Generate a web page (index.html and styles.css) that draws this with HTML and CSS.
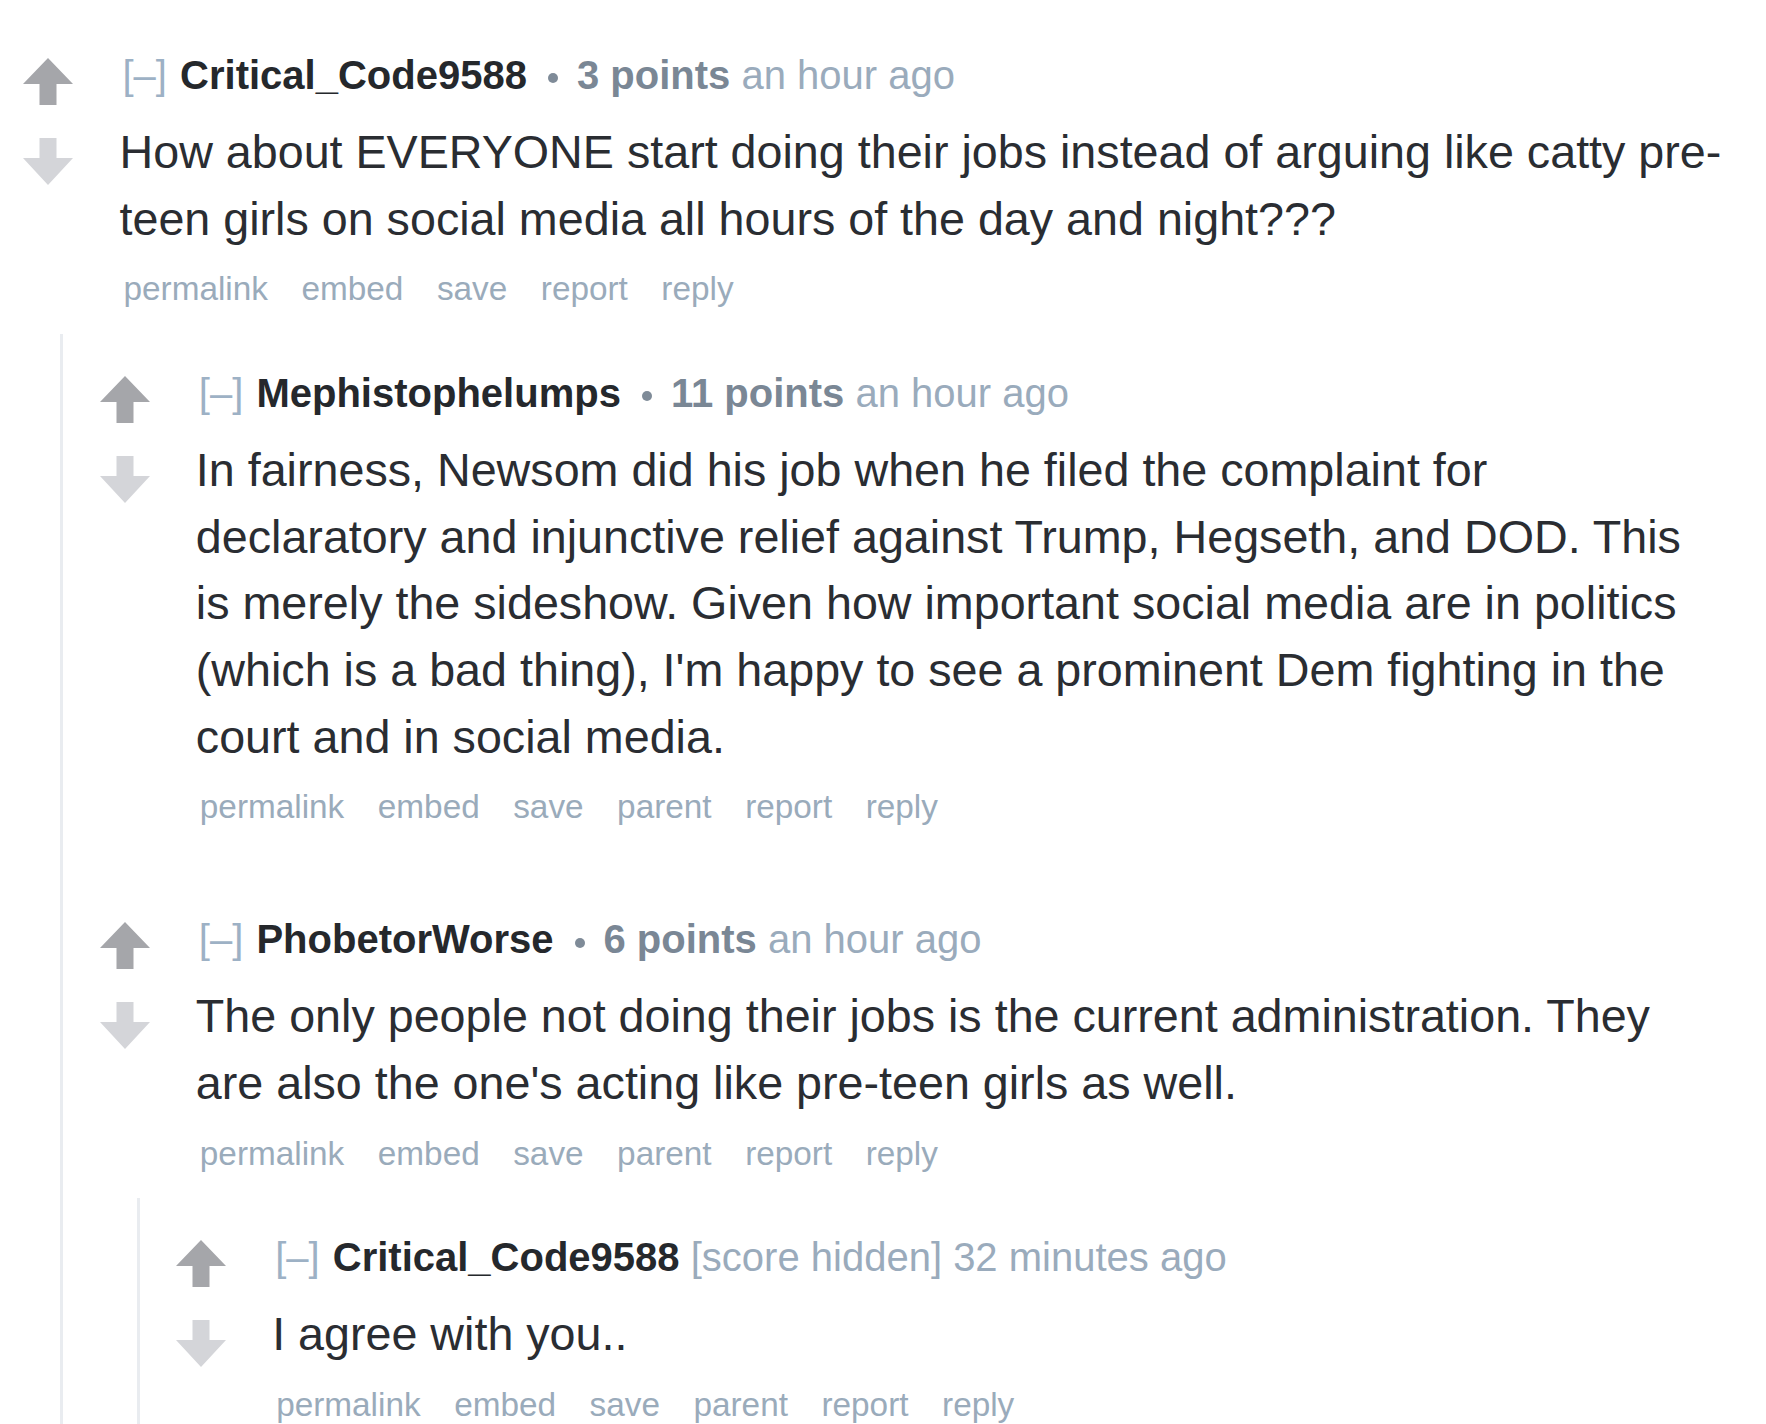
FILE: index.html
```html
<!DOCTYPE html>
<html lang="en">
<head>
<meta charset="utf-8">
<title>Comments</title>
<link rel="stylesheet" href="styles.css">
</head>
<body>
<div class="page">
  <div class="comment">
    <div class="row">
      <div class="midcol">
        <svg class="arrow" viewBox="0 0 50 47"><polygon class="up" points="25,0 50,26 33.5,26 33.5,47 16.5,47 16.5,26 0,26"/></svg>
        <svg class="arrow" viewBox="0 0 50 47"><polygon class="down" points="16.5,0 33.5,0 33.5,20 50,20 25,47 0,20 16.5,20"/></svg>
      </div>
      <div class="entry">
        <p class="tagline"><span class="expand">[–]</span> <span class="author">Critical_Code9588</span><span class="dot"></span><span class="score">3 points</span> <span class="live">an hour ago</span></p>
        <div class="md"><p>How about EVERYONE start doing their jobs instead of arguing like catty pre-teen girls on social media all hours of the day and night???</p></div>
        <ul class="buttons"><li>permalink</li><li>embed</li><li>save</li><li>report</li><li>reply</li></ul>
      </div>
    </div>
    <div class="child">
      <div class="comment">
        <div class="row">
          <div class="midcol">
            <svg class="arrow" viewBox="0 0 50 47"><polygon class="up" points="25,0 50,26 33.5,26 33.5,47 16.5,47 16.5,26 0,26"/></svg>
            <svg class="arrow" viewBox="0 0 50 47"><polygon class="down" points="16.5,0 33.5,0 33.5,20 50,20 25,47 0,20 16.5,20"/></svg>
          </div>
          <div class="entry">
            <p class="tagline"><span class="expand">[–]</span> <span class="author">Mephistophelumps</span><span class="dot"></span><span class="score">11 points</span> <span class="live">an hour ago</span></p>
            <div class="md"><p>In fairness, Newsom did his job when he filed the complaint for declaratory and injunctive relief against Trump, Hegseth, and DOD. This is merely the sideshow. Given how important social media are in politics (which is a bad thing), I'm happy to see a prominent Dem fighting in the court and in social media.</p></div>
            <ul class="buttons"><li>permalink</li><li>embed</li><li>save</li><li>parent</li><li>report</li><li>reply</li></ul>
          </div>
        </div>
      </div>
      <div class="comment">
        <div class="row">
          <div class="midcol">
            <svg class="arrow" viewBox="0 0 50 47"><polygon class="up" points="25,0 50,26 33.5,26 33.5,47 16.5,47 16.5,26 0,26"/></svg>
            <svg class="arrow" viewBox="0 0 50 47"><polygon class="down" points="16.5,0 33.5,0 33.5,20 50,20 25,47 0,20 16.5,20"/></svg>
          </div>
          <div class="entry">
            <p class="tagline"><span class="expand">[–]</span> <span class="author">PhobetorWorse</span><span class="dot"></span><span class="score">6 points</span> <span class="live">an hour ago</span></p>
            <div class="md"><p>The only people not doing their jobs is the current administration. They are also the one's acting like pre-teen girls as well.</p></div>
            <ul class="buttons"><li>permalink</li><li>embed</li><li>save</li><li>parent</li><li>report</li><li>reply</li></ul>
          </div>
        </div>
        <div class="child">
          <div class="comment">
            <div class="row">
              <div class="midcol">
                <svg class="arrow" viewBox="0 0 50 47"><polygon class="up" points="25,0 50,26 33.5,26 33.5,47 16.5,47 16.5,26 0,26"/></svg>
                <svg class="arrow" viewBox="0 0 50 47"><polygon class="down" points="16.5,0 33.5,0 33.5,20 50,20 25,47 0,20 16.5,20"/></svg>
              </div>
              <div class="entry">
                <p class="tagline"><span class="expand">[–]</span> <span class="author">Critical_Code9588</span> <span class="live">[score hidden]</span> <span class="live">32 minutes ago</span></p>
                <div class="md"><p>I agree with you..</p></div>
                <ul class="buttons"><li>permalink</li><li>embed</li><li>save</li><li>parent</li><li>report</li><li>reply</li></ul>
              </div>
            </div>
          </div>
        </div>
      </div>
    </div>
  </div>
</div>
</body>
</html>
```

FILE: styles.css
```css
html, body {
  margin: 0;
  padding: 0;
  background: #ffffff;
}

body {
  font-family: "Liberation Sans", Arial, sans-serif;
  color: #2a2d32;
  overflow: hidden;
}

.page {
  padding: 16px 41.2px 0 0;
}

.comment {
  padding: 35px 0 53px 23.33px;
}

.row {
  display: flex;
  align-items: flex-start;
}

.midcol {
  flex: none;
  width: 50px;
  margin-right: 46.17px;
  padding-top: 7px;
  display: flex;
  flex-direction: column;
  gap: 33px;
}

.arrow {
  display: block;
  width: 50px;
  height: 47px;
}

.up {
  fill: #a5a6aa;
}

.down {
  fill: #d4d5d9;
}

.entry {
  flex: 1;
  min-width: 0;
}

.tagline {
  margin: 0;
  padding-left: 3px;
  font-size: 40px;
  line-height: 48px;
  white-space: nowrap;
  color: #9aabbc;
}

.expand {
  color: #9db1c5;
  margin-right: 2px;
}

.author {
  font-weight: bold;
  color: #25282c;
}

.dot {
  display: inline-block;
  width: 10px;
  height: 10px;
  border-radius: 50%;
  background: #7f8b98;
  margin: 0 19px 0 21px;
  vertical-align: middle;
}

.score {
  font-weight: bold;
  color: #7a8795;
}

.live {
  color: #9aabbc;
}

.md {
  margin-top: 20px;
  font-size: 46.67px;
  line-height: 66.67px;
  color: #2a2d32;
}

.md p {
  margin: 0;
}

.buttons {
  list-style: none;
  margin: 17px 0 0;
  padding: 0 0 0 4px;
  display: flex;
  gap: 33.5px;
  font-size: 33.33px;
  line-height: 40px;
  color: #9aabbb;
}

.child {
  margin: 24.67px 0 0 37px;
  border-left: 3.33px solid #e9ecf0;
  padding-left: 13px;
}
```
